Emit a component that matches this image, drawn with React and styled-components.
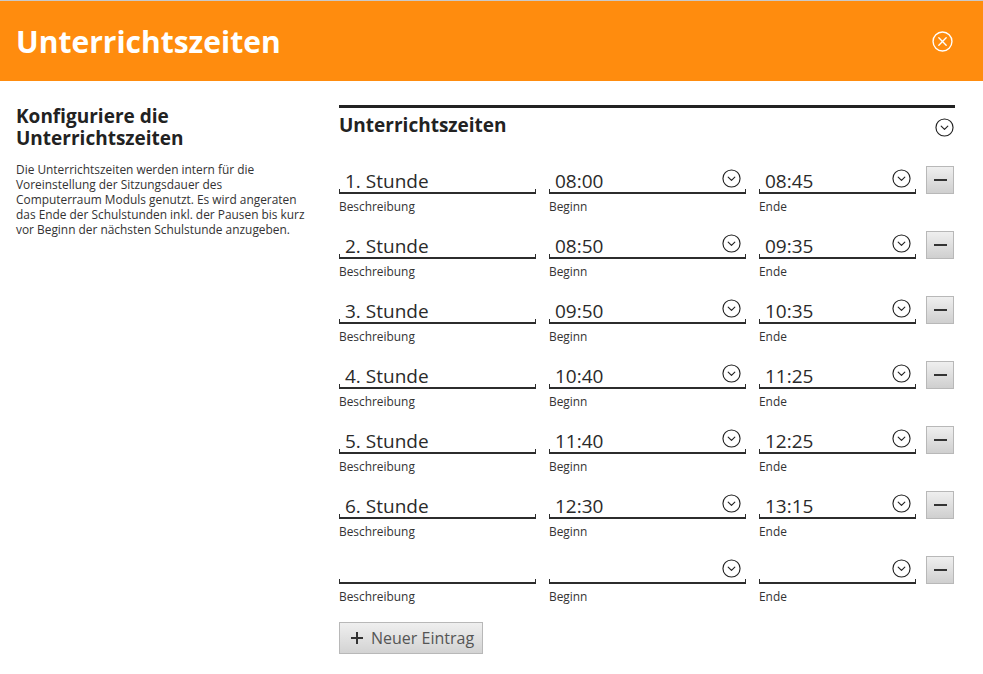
import React from 'react'
import styled, { createGlobalStyle } from 'styled-components'

const GlobalStyle = createGlobalStyle`
  body {
    margin: 0;
    background: #fff;
    font-family: 'Open Sans', 'Liberation Sans', sans-serif;
    color: #222;
  }
`

const Header = styled.header`
  height: 80px;
  border-top: 1px solid #c9c9c9;
  background-color: #ff8c0e;
  display: flex;
  align-items: center;
  justify-content: space-between;
  padding: 0 30px 0 16px;
`

const Title = styled.h1`
  margin: 0;
  font-size: 30px;
  font-weight: 700;
  color: #fff;
`

const CloseButton = styled.button`
  border: none;
  background: none;
  padding: 0;
  display: flex;
  cursor: pointer;
`

const Main = styled.main`
  display: grid;
  grid-template-columns: 300px 616px;
  column-gap: 23px;
  padding: 21px 16px 0 16px;
`

const Aside = styled.section`
  padding-top: 3px;
`

const AsideTitle = styled.h2`
  margin: 0 0 13px 0;
  font-size: 19px;
  line-height: 22px;
  font-weight: 700;
  color: #222;
`

const AsideText = styled.p`
  margin: 0;
  max-width: 294px;
  font-size: 11.9px;
  line-height: 15px;
  color: #333;
`

const Panel = styled.section`
  margin-top: 3px;
  border-top: 3px solid #222;
`

const PanelHead = styled.div`
  display: flex;
  justify-content: space-between;
  align-items: flex-start;
  padding: 5px 1px 0 0;
  height: 36px;
  box-sizing: border-box;
  margin-bottom: 20px;
`

const PanelTitle = styled.h3`
  margin: 0;
  font-size: 19px;
  line-height: 24px;
  font-weight: 700;
  color: #222;
`

const HeadToggle = styled.span`
  display: flex;
  margin-top: 5px;
`

const Rows = styled.div`
  display: flex;
  flex-direction: column;
  gap: 15px;
`

const Row = styled.div`
  display: grid;
  grid-template-columns: 197px 197px 157px 28px;
  column-gap: 13px;
`

const Field = styled.div`
  display: flex;
  flex-direction: column;
`

const InputLine = styled.div`
  height: 25px;
  display: flex;
  align-items: center;
  justify-content: space-between;
  padding: 3px 5px 0 6px;
  box-sizing: border-box;
`

const Value = styled.span`
  font-size: 19px;
  line-height: 25px;
  color: #2a2a2a;
  padding-top: 6px;
`

const Underline = styled.div`
  height: 3px;
  border: 1.5px solid #2c2c2c;
  border-bottom-width: 2px;
  border-top: none;
`

const Label = styled.div`
  margin-top: 5px;
  font-size: 11.9px;
  line-height: 15px;
  color: #333;
`

const MinusButton = styled.button`
  width: 28px;
  height: 28px;
  margin: 2px 0 0 -3px;
  padding: 0;
  border: 1px solid #b8b8b8;
  background: linear-gradient(#efefef, #cfcfcf);
  display: flex;
  align-items: center;
  justify-content: center;
  cursor: pointer;
`

const MinusBar = styled.span`
  width: 13px;
  height: 2px;
  background: #333;
`

const AddButton = styled.button`
  margin-top: 18px;
  width: 144px;
  height: 32px;
  border: 1px solid #b8b8b8;
  background: linear-gradient(#efefef, #d3d3d3);
  display: flex;
  align-items: center;
  gap: 7px;
  padding: 0 0 0 10px;
  font-family: 'Open Sans', 'Liberation Sans', sans-serif;
  font-size: 16px;
  color: #555;
  cursor: pointer;
`

const ChevronCircle = ({ size = 19 }) => (
  <svg width={size} height={size} viewBox="0 0 20 20" fill="none" stroke="#222" strokeWidth="1.2">
    <circle cx="10" cy="10" r="9" />
    <path d="M6.5 8.5 L10 12 L13.5 8.5" strokeLinecap="round" strokeLinejoin="round" />
  </svg>
)

const CloseIcon = () => (
  <svg width="21" height="21" viewBox="0 0 20 20" fill="none" stroke="#fff" strokeWidth="1.3">
    <circle cx="10" cy="10" r="9" />
    <path d="M6.5 6.5 L13.5 13.5 M13.5 6.5 L6.5 13.5" strokeLinecap="round" />
  </svg>
)

const PlusIcon = () => (
  <svg width="14" height="14" viewBox="0 0 14 14" stroke="#333" strokeWidth="2">
    <path d="M7 1 V13 M1 7 H13" />
  </svg>
)

const entries = [
  ['1. Stunde', '08:00', '08:45'],
  ['2. Stunde', '08:50', '09:35'],
  ['3. Stunde', '09:50', '10:35'],
  ['4. Stunde', '10:40', '11:25'],
  ['5. Stunde', '11:40', '12:25'],
  ['6. Stunde', '12:30', '13:15'],
  ['', '', ''],
]

const InputField = ({ value, label, select }) => (
  <Field>
    <InputLine>
      <Value>{value}</Value>
      {select && <ChevronCircle />}
    </InputLine>
    <Underline />
    <Label>{label}</Label>
  </Field>
)

export default function App() {
  return (
    <>
      <GlobalStyle />
      <Header>
        <Title>Unterrichtszeiten</Title>
        <CloseButton aria-label="Schließen">
          <CloseIcon />
        </CloseButton>
      </Header>
      <Main>
        <Aside>
          <AsideTitle>Konfiguriere die Unterrichtszeiten</AsideTitle>
          <AsideText>
            Die Unterrichtszeiten werden intern für die Voreinstellung der Sitzungsdauer des
            Computerraum Moduls genutzt. Es wird angeraten das Ende der Schulstunden inkl. der
            Pausen bis kurz vor Beginn der nächsten Schulstunde anzugeben.
          </AsideText>
        </Aside>
        <Panel>
          <PanelHead>
            <PanelTitle>Unterrichtszeiten</PanelTitle>
            <HeadToggle>
              <ChevronCircle />
            </HeadToggle>
          </PanelHead>
          <Rows>
            {entries.map(([name, start, end], i) => (
              <Row key={i}>
                <InputField value={name} label="Beschreibung" />
                <InputField value={start} label="Beginn" select />
                <InputField value={end} label="Ende" select />
                <MinusButton aria-label="Entfernen">
                  <MinusBar />
                </MinusButton>
              </Row>
            ))}
          </Rows>
          <AddButton>
            <PlusIcon />
            Neuer Eintrag
          </AddButton>
        </Panel>
      </Main>
    </>
  )
}
